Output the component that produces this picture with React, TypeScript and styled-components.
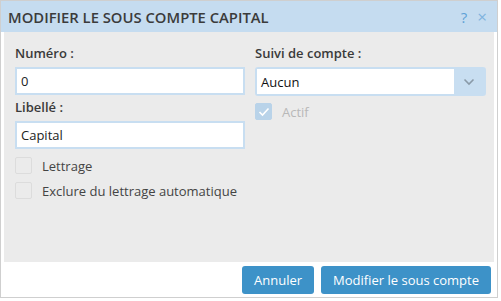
import styled, { createGlobalStyle } from "styled-components";

const GlobalStyle = createGlobalStyle`
  html, body {
    margin: 0;
    padding: 0;
    background: #ffffff;
    font-family: "Open Sans", "DejaVu Sans", sans-serif;
    overflow: hidden;
  }
`;

export default function App() {
  return (
    <>
      <GlobalStyle />
      <Dialog>
        <Header>
          <Title>MODIFIER LE SOUS COMPTE CAPITAL</Title>
          <HeaderIcons>
            <HelpIcon>?</HelpIcon>
            <CloseIcon>×</CloseIcon>
          </HeaderIcons>
        </Header>
        <Body>
          <Column>
            <Label>Numéro :</Label>
            <TextInput defaultValue="0" />
            <Label>Libellé :</Label>
            <TextInput defaultValue="Capital" />
            <Checks>
              <CheckRow>
                <Box />
                <CheckLabel>Lettrage</CheckLabel>
              </CheckRow>
              <CheckRow>
                <Box />
                <CheckLabel>Exclure du lettrage automatique</CheckLabel>
              </CheckRow>
            </Checks>
          </Column>
          <Column>
            <Label>Suivi de compte :</Label>
            <Select>
              <SelectValue>Aucun</SelectValue>
              <SelectArrow>
                <svg width="12" height="8" viewBox="0 0 12 8">
                  <path d="M1.5 1.5 L6 6 L10.5 1.5" fill="none" stroke="#8a9aa8" strokeWidth="1.6" />
                </svg>
              </SelectArrow>
            </Select>
            <CheckRow>
              <Box $checked>
                <svg width="12" height="10" viewBox="0 0 12 10">
                  <path d="M1.5 5 L4.5 8 L10.5 1.5" fill="none" stroke="#ffffff" strokeWidth="1.6" />
                </svg>
              </Box>
              <CheckLabel $disabled>Actif</CheckLabel>
            </CheckRow>
          </Column>
        </Body>
        <Footer>
          <Button>Annuler</Button>
          <Button>Modifier le sous compte</Button>
        </Footer>
      </Dialog>
    </>
  );
}

const Dialog = styled.div`
  width: 498px;
  height: 298px;
  box-sizing: border-box;
  border: 1px solid #cfcfcf;
  display: flex;
  flex-direction: column;
  background: #ffffff;
`;

const Header = styled.div`
  height: 31px;
  background: #c5dcf0;
  display: flex;
  align-items: center;
  justify-content: space-between;
  padding: 0 10px 0 7px;
`;

const Title = styled.h1`
  margin: 0;
  font-size: 14.8px;
  font-weight: 600;
  color: #3b3b3b;
`;

const HeaderIcons = styled.div`
  display: flex;
  align-items: center;
  gap: 10px;
`;

const HelpIcon = styled.span`
  font-size: 15px;
  color: #5fa2d6;
`;

const CloseIcon = styled.span`
  font-size: 17px;
  color: #7fb3de;
`;

const Body = styled.div`
  flex: 1;
  margin: 0 3px;
  background: #ebebeb;
  display: grid;
  grid-template-columns: 230px 231px;
  column-gap: 10px;
  padding: 10px 11px 0;
  align-content: start;
`;

const Column = styled.div`
  display: flex;
  flex-direction: column;
`;

const Label = styled.label`
  font-size: 13px;
  font-weight: 600;
  color: #3a3a3a;
  height: 25px;
  line-height: 22px;
`;

const TextInput = styled.input`
  box-sizing: border-box;
  width: 230px;
  height: 28px;
  border: 2px solid #c8def1;
  background: #ffffff;
  padding: 0 4px;
  font-family: "Open Sans", sans-serif;
  font-size: 13px;
  color: #222;
  outline: none;
  margin-bottom: 1px;
`;

const Checks = styled.div`
  padding-top: 3px;
  display: flex;
  flex-direction: column;
`;

const Select = styled.div`
  box-sizing: border-box;
  width: 231px;
  height: 29px;
  display: flex;
  border: 2px solid #c8def1;
  border-radius: 3px;
  background: #c8def1;
  margin-bottom: 3px;
`;

const SelectValue = styled.div`
  flex: 1;
  background: #ffffff;
  display: flex;
  align-items: center;
  padding: 0 4px;
  font-size: 13px;
  color: #111;
`;

const SelectArrow = styled.div`
  width: 30px;
  display: flex;
  align-items: center;
  justify-content: center;
`;

const CheckRow = styled.div`
  display: flex;
  align-items: center;
  height: 25px;
  gap: 10px;
`;

const Box = styled.div<{ $checked?: boolean }>`
  box-sizing: border-box;
  width: 17px;
  height: 17px;
  border-radius: 2px;
  border: 1px solid ${(p) => (p.$checked ? "#b9d3e9" : "#dcdcdc")};
  background: ${(p) => (p.$checked ? "#b9d3e9" : "#ebebeb")};
  display: flex;
  align-items: center;
  justify-content: center;
`;

const CheckLabel = styled.span<{ $disabled?: boolean }>`
  font-size: 13px;
  color: ${(p) => (p.$disabled ? "#b8b8b8" : "#444")};
`;

const Footer = styled.div`
  height: 35px;
  display: flex;
  justify-content: flex-end;
  align-items: center;
  gap: 7px;
  padding: 0 6px;
`;

const Button = styled.button`
  height: 28px;
  padding: 0 12px;
  border: none;
  border-radius: 3px;
  background: #3d92c8;
  color: #ffffff;
  font-family: "Open Sans", sans-serif;
  font-size: 13px;
  font-weight: 500;
`;
